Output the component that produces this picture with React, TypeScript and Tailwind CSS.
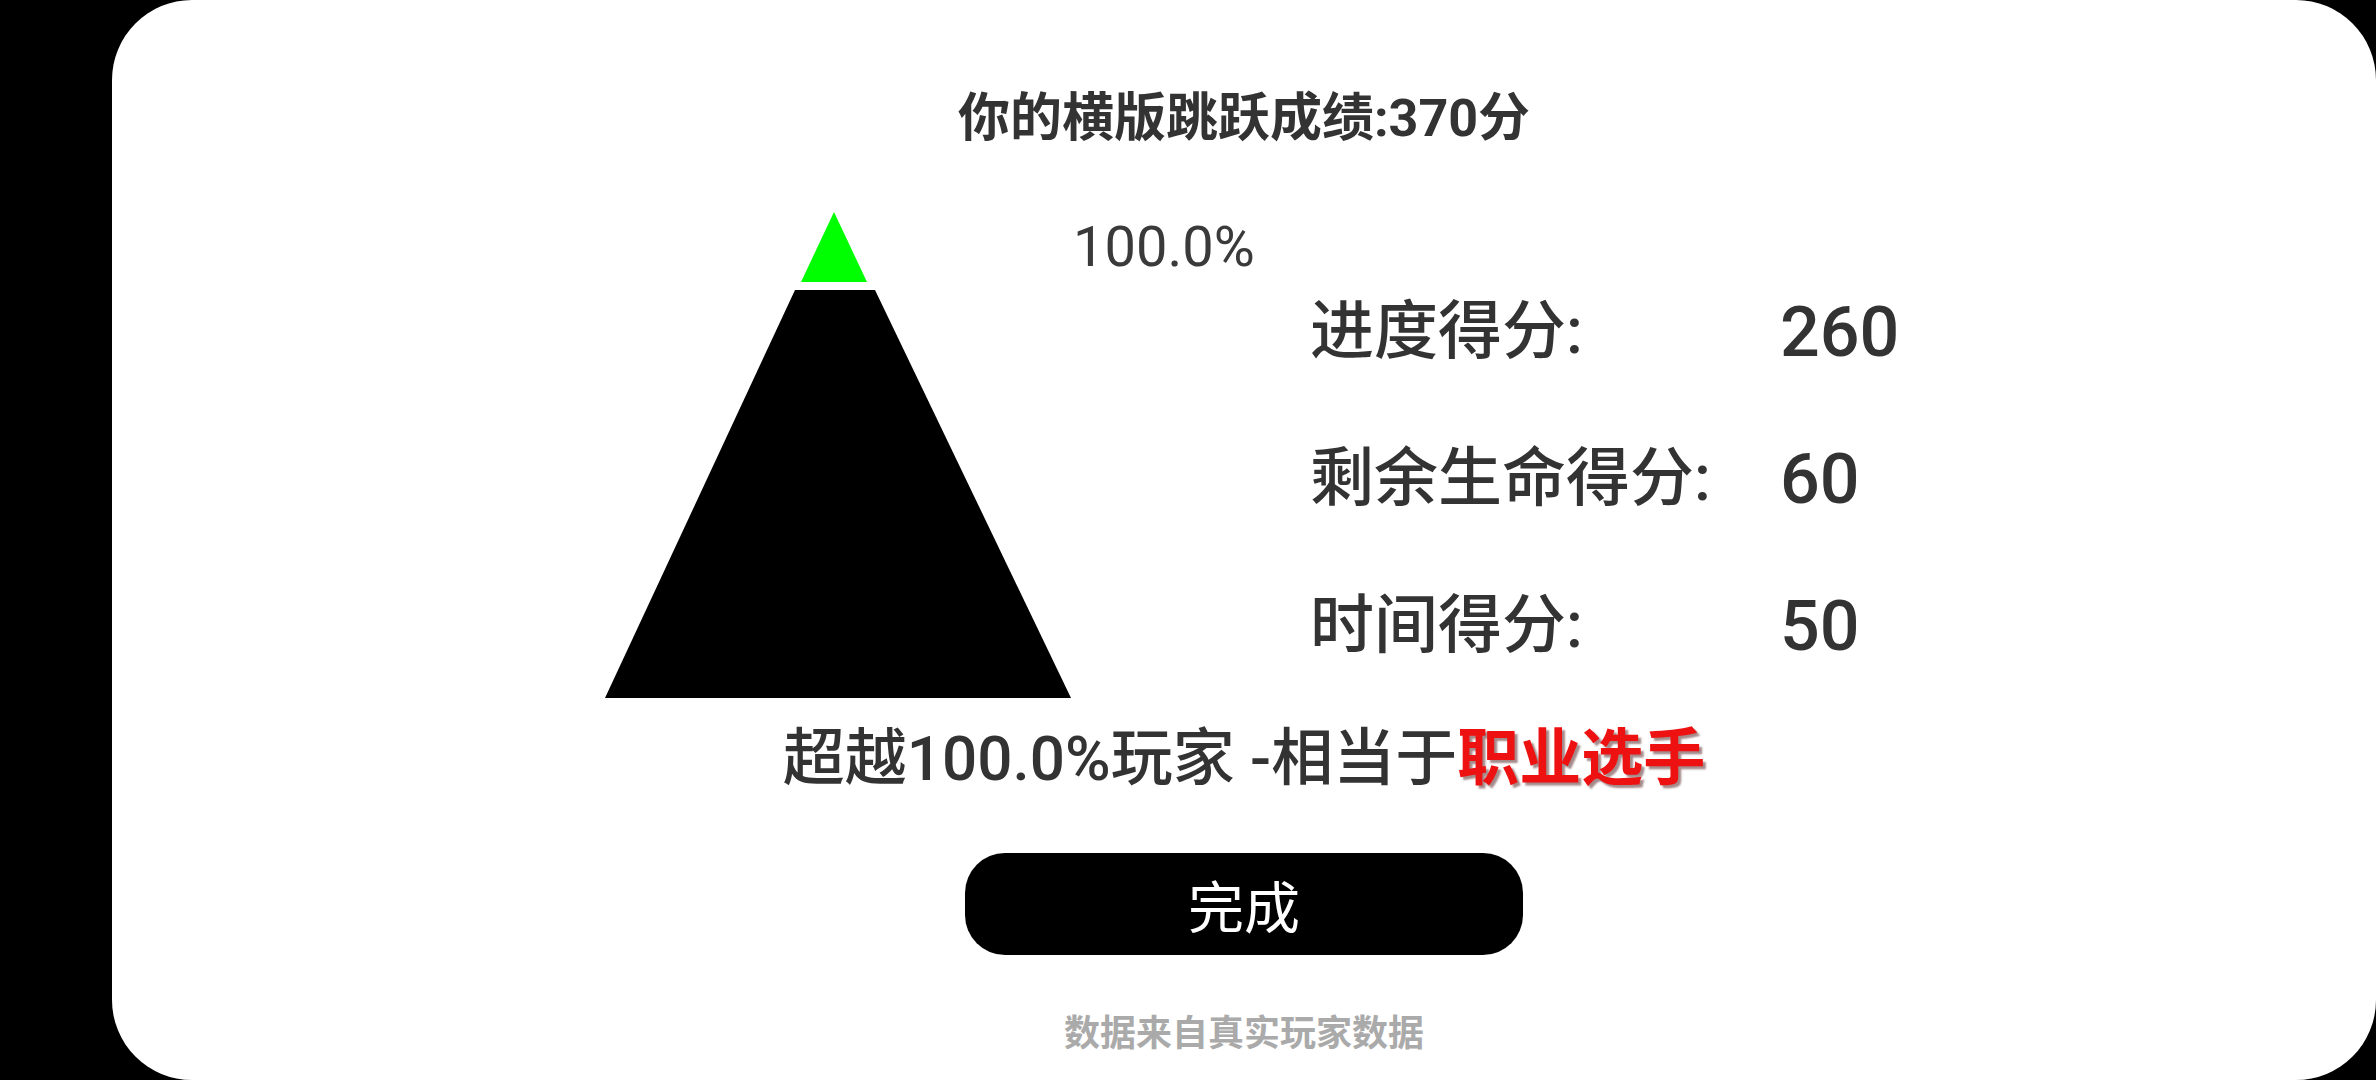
const font = "font-['Roboto','Noto_Sans_CJK_SC',sans-serif]";

const scores = [
  { label: "进度得分:", value: "260" },
  { label: "剩余生命得分:", value: "60" },
  { label: "时间得分:", value: "50" },
];

function Pyramid() {
  return (
    <svg width="466" height="486" viewBox="0 0 466 486" className="shrink-0">
      <polygon points="229,0 262,70 196,70" fill="#00ff00" />
      <polygon points="190,78 270,78 466,486 0,486" fill="#000000" />
    </svg>
  );
}

export default function App() {
  return (
    <div className={`min-h-screen w-full bg-black ${font}`}>
      <div className="ml-[112px] flex h-[1080px] w-[2264px] flex-col items-center rounded-[80px] bg-white pt-[93px] text-[#333333]">
        <h1 className="text-[52px] font-bold leading-none">你的横版跳跃成绩:370分</h1>

        <div className="mt-[67px] flex self-start ml-[493px]">
          <Pyramid />
          <div className="w-[239px] pl-[2px]">
            <div className="mt-[7px] text-[56px] leading-none text-[#3a3a3a]">100.0%</div>
          </div>
          <div className="mt-[85px] flex flex-col gap-[77px]">
            {scores.map((s) => (
              <div key={s.label} className="flex h-[70px] items-center">
                <span className="w-[470px] text-[64px] font-medium leading-none">{s.label}</span>
                <span className="text-[70px] font-medium leading-none">{s.value}</span>
              </div>
            ))}
          </div>
        </div>

        <p className="mt-[30px] text-[62px] font-medium leading-none">
          超越100.0%玩家 -相当于
          <span className="font-bold text-[#ee1111] [text-shadow:3px_3px_2px_rgba(90,40,40,0.55)]">职业选手</span>
        </p>

        <button className="mt-[63px] flex h-[102px] w-[558px] items-center justify-center rounded-[40px] bg-black pt-[10px] text-[56px] leading-none text-white">
          完成
        </button>

        <p className="mt-[61px] text-[36px] font-bold leading-none text-[#aaaaaa]">数据来自真实玩家数据</p>
      </div>
    </div>
  );
}
